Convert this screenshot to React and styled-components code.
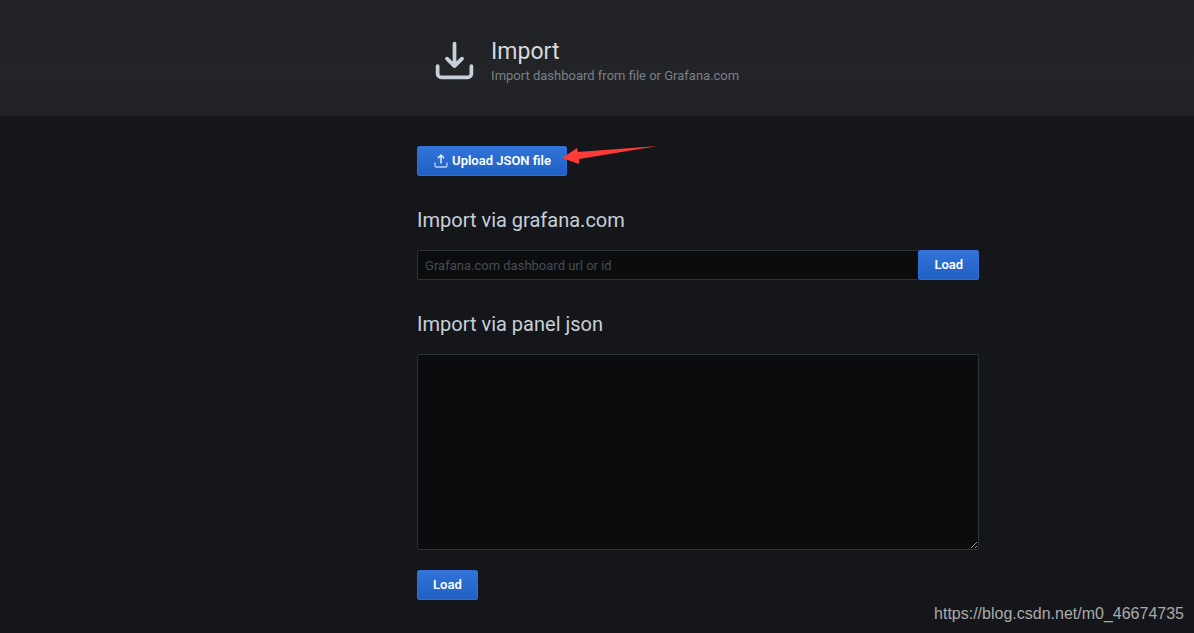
import React, { useState } from 'react';
import styled, { createGlobalStyle } from 'styled-components';

const App = () => {
    const [dashboard, setDashboard] = useState('');
    const [panelJson, setPanelJson] = useState('');

    const handleSubmit = event => {
        event.preventDefault();
    }

    return (
        <Page>
            <GlobalStyle />
            <Header>
                <HeaderInner>
                    <HeaderIcon viewBox='0 0 24 24' aria-hidden='true'>
                        <path d='M21,14a1,1,0,0,0-1,1v4a1,1,0,0,1-1,1H5a1,1,0,0,1-1-1V15a1,1,0,0,0-2,0v4a3,3,0,0,0,3,3H19a3,3,0,0,0,3-3V15A1,1,0,0,0,21,14Zm-9.71,1.71a1,1,0,0,0,.33.21.94.94,0,0,0,.76,0,1,1,0,0,0,.33-.21l4-4a1,1,0,0,0-1.42-1.42L13,12.59V3a1,1,0,0,0-2,0v9.59l-2.29-2.3a1,1,0,1,0-1.42,1.42Z' />
                    </HeaderIcon>
                    <div>
                        <Title>Import</Title>
                        <Subtitle>Import dashboard from file or Grafana.com</Subtitle>
                    </div>
                </HeaderInner>
            </Header>
            <Main>
                <Content>
                    <UploadRow>
                        <Button type='button'>
                            <ButtonIcon viewBox='0 0 24 24' aria-hidden='true'>
                                <path opacity='.7' d='M21,14a1,1,0,0,0-1,1v4a1,1,0,0,1-1,1H5a1,1,0,0,1-1-1V15a1,1,0,0,0-2,0v4a3,3,0,0,0,3,3H19a3,3,0,0,0,3-3V15A1,1,0,0,0,21,14Z' />
                                <path d='M8.71,7.71,11,5.41V15a1,1,0,0,0,2,0V5.41l2.29,2.3a1,1,0,0,0,1.42,0,1,1,0,0,0,0-1.42l-4-4a1,1,0,0,0-.33-.21,1,1,0,0,0-.76,0,1,1,0,0,0-.33.21l-4,4A1,1,0,1,0,8.71,7.71Z' />
                            </ButtonIcon>
                            Upload JSON file
                        </Button>
                        <Arrow viewBox='0 0 96 20' aria-hidden='true'>
                            <path d='M0 12 L15 2 L16 6 L96 0 L17 13 L17 18 Z' />
                        </Arrow>
                    </UploadRow>
                    <form onSubmit={handleSubmit}>
                        <Label htmlFor='dashboard'>Import via grafana.com</Label>
                        <InputRow>
                            <Input
                                id='dashboard'
                                type='text'
                                placeholder='Grafana.com dashboard url or id'
                                value={dashboard}
                                onChange={event => setDashboard(event.target.value)}
                            />
                            <Button type='submit'>Load</Button>
                        </InputRow>
                    </form>
                    <form onSubmit={handleSubmit}>
                        <Label htmlFor='panel-json'>Import via panel json</Label>
                        <TextArea
                            id='panel-json'
                            rows={10}
                            value={panelJson}
                            onChange={event => setPanelJson(event.target.value)}
                        />
                        <Button type='submit'>Load</Button>
                    </form>
                </Content>
            </Main>
            <Watermark>https://blog.csdn.net/m0_46674735</Watermark>
        </Page>
    )
}

const GlobalStyle = createGlobalStyle`
    *, *::before, *::after {
        box-sizing: border-box;
    }

    body {
        margin: 0;
        background: #15161a;
        color: #c7d0d9;
        font-family: Roboto, sans-serif;
        font-size: 13px;
        line-height: 20px;
    }
`

const Page = styled.div`
    position: relative;
    min-height: 100vh;
`

const Columns = styled.div`
    display: grid;
    grid-template-columns: minmax(16px, 1fr) minmax(0, 562px) minmax(16px, 18%);

    > * {
        grid-column: 2;
    }
`

const Header = styled(Columns)`
    padding: 38px 0 30px;
    background: linear-gradient(180deg, #202226 30%, #222427 60%, #202225 100%);
`

const HeaderInner = styled.header`
    display: flex;
    align-items: flex-start;
    gap: 14px;
    padding-left: 15px;
`

const HeaderIcon = styled.svg`
    width: 45px;
    height: 45px;
    flex: none;
    fill: #c7d0d9;
`

const Title = styled.h1`
    margin: 0;
    color: #d8d9da;
    font-size: 23px;
    font-weight: 400;
    line-height: 28px;
`

const Subtitle = styled.div`
    color: #7b8087;
`

const Main = styled(Columns)`
    padding: 30px 0 32px;
`

const Content = styled.main`
    display: flex;
    flex-direction: column;
    gap: 30px;
`

const UploadRow = styled.div`
    position: relative;
    display: flex;
`

const Button = styled.button`
    display: inline-flex;
    align-items: center;
    gap: 3px;
    flex: none;
    height: 30px;
    padding: 0 15px;
    border: 1px solid #2f6fd6;
    border-radius: 2px;
    background: linear-gradient(180deg, #3274d9 0%, #1f60c4 100%) border-box;
    color: #fff;
    font-family: inherit;
    font-size: 13px;
    font-weight: 600;
    line-height: 28px;
    cursor: pointer;
`

const ButtonIcon = styled.svg`
    width: 16px;
    height: 16px;
    fill: #fff;
`

const Arrow = styled.svg`
    position: absolute;
    top: 0;
    left: 145px;
    width: 96px;
    height: 20px;
    fill: #ff3b38;
    pointer-events: none;
`

const Label = styled.label`
    display: block;
    margin-bottom: 16px;
    font-size: 20px;
    line-height: 28px;
`

const InputRow = styled.div`
    display: flex;
`

const Input = styled.input`
    flex: 1;
    min-width: 0;
    height: 30px;
    padding: 0 7px;
    border: 1px solid #2c3235;
    border-right: 0;
    border-radius: 2px 0 0 2px;
    background: #0b0c0e;
    color: #c7d0d9;
    font: inherit;

    &::placeholder {
        color: #464c54;
    }
`

const TextArea = styled.textarea`
    display: block;
    width: 100%;
    height: 196px;
    margin-bottom: 20px;
    padding: 4px 7px;
    border: 1px solid #2c3235;
    border-radius: 2px;
    background: #0b0c0e;
    color: #c7d0d9;
    font: inherit;
`

const Watermark = styled.div`
    position: absolute;
    right: 10px;
    bottom: 9px;
    color: #a9aaab;
    font-family: 'Liberation Sans', Arial, sans-serif;
    font-size: 16px;
`

export default App;
